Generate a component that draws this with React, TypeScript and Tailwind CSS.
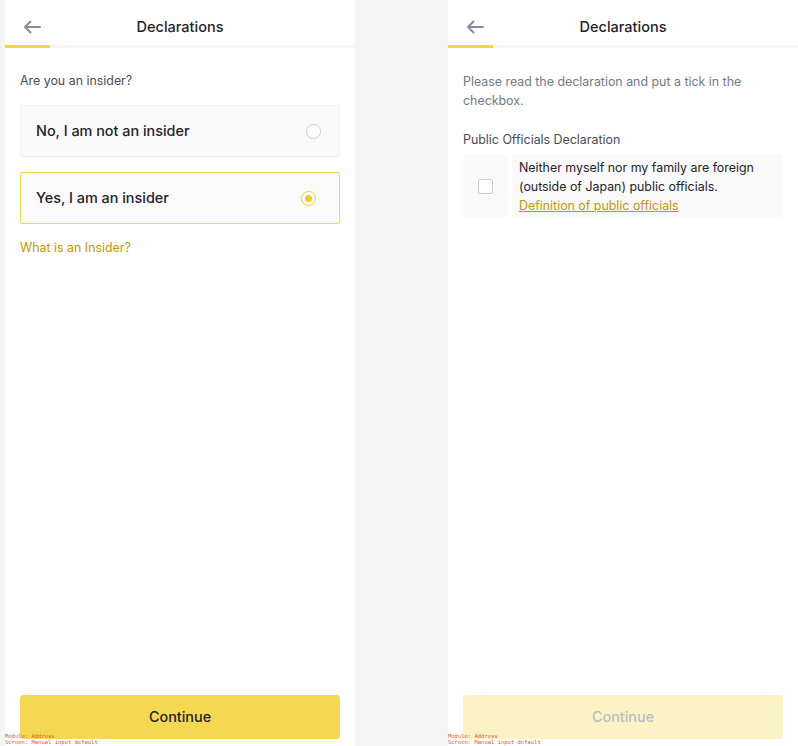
import React from "react";

const font = { fontFamily: "Inter, 'Noto Sans', sans-serif" };

function Header() {
  return (
    <div>
      <div className="relative h-[45px] flex items-start justify-center pt-[17px]">
        <svg className="absolute left-[18px] top-[20px]" width="18" height="14" viewBox="0 0 18 14" fill="none">
          <path d="M17 7H2M7.5 1.5L2 7l5.5 5.5" stroke="#848e9c" strokeWidth="2" strokeLinecap="round" strokeLinejoin="round" />
        </svg>
        <span className="text-[14.5px] leading-[20px] font-medium text-[#1e2329]">Declarations</span>
      </div>
      <div className="h-[3px] bg-[#f5f5f5] flex">
        <div className="w-[45px] h-[3px] bg-[#f5d34a]" />
      </div>
    </div>
  );
}

function Debug() {
  return (
    <div className="absolute left-0 bottom-[1px] text-[5.5px] leading-[6px] text-[#e5532d]" style={{ fontFamily: "'DejaVu Sans Mono', monospace" }}>
      <div>Module: Address</div>
      <div>Screen: Manual input default</div>
    </div>
  );
}

export default function App() {
  return (
    <div className="w-[798px] h-[746px] bg-[#f5f5f5] flex" style={font}>
      <div className="ml-[5px] w-[350px] h-[746px] bg-white flex flex-col relative">
        <Header />
        <div className="px-[15px] flex-1 flex flex-col">
          <div className="mt-[25px] text-[12.4px] leading-[16px] text-[#474d57]">Are you an insider?</div>
          <div className="mt-[16px] h-[52px] rounded-[3px] border border-[#f0f0f0] bg-[#fafafa] flex items-center justify-between pl-[15px] pr-[18px]">
            <span className="text-[14.4px] font-medium text-[#1e2329]">No, I am not an insider</span>
            <span className="w-[15px] h-[15px] rounded-full border border-[#c7cbd1] bg-white" />
          </div>
          <div className="mt-[15px] h-[52px] rounded-[3px] border border-[#f5d34a] bg-[#fbfbfb] flex items-center justify-between pl-[15px] pr-[23px]">
            <span className="text-[14.4px] font-medium text-[#1e2329]">Yes, I am an insider</span>
            <span className="w-[15px] h-[15px] rounded-full border-[1.5px] border-[#f0c929] bg-white flex items-center justify-center">
              <span className="w-[7px] h-[7px] rounded-full bg-[#f0c929]" />
            </span>
          </div>
          <div className="mt-[16px] text-[12.4px] leading-[16px] text-[#c99400]">What is an Insider?</div>
          <div className="flex-1" />
          <div className="mb-[7px] h-[44px] rounded-[4px] bg-[#f5d851] flex items-center justify-center text-[14.4px] font-medium text-[#1e2329]">Continue</div>
        </div>
        <Debug />
      </div>
      <div className="ml-[93px] w-[350px] h-[746px] bg-white flex flex-col relative">
        <Header />
        <div className="px-[15px] flex-1 flex flex-col">
          <div className="mt-[24px] text-[12.4px] leading-[19px] text-[#707a8a]">Please read the declaration and put a tick in the checkbox.</div>
          <div className="mt-[22px] text-[12.4px] leading-[16px] text-[#474d57]">Public Officials Declaration</div>
          <div className="mt-[6px] flex gap-[4px] h-[64px]">
            <div className="w-[45px] rounded-[3px] bg-[#fafafa] flex items-center justify-center">
              <span className="w-[15px] h-[15px] rounded-[2px] border border-[#c7cbd1] bg-white" />
            </div>
            <div className="flex-1 rounded-[3px] bg-[#fafafa] px-[7px] pt-[4px] text-[12.4px] leading-[19px] text-[#1e2329]">
              <div>Neither myself nor my family are foreign (outside of Japan) public officials.</div>
              <div className="text-[#c99400] underline">Definition of public officials</div>
            </div>
          </div>
          <div className="flex-1" />
          <div className="mb-[7px] h-[44px] rounded-[4px] bg-[#fcf3c5] flex items-center justify-center text-[14.4px] font-medium text-[#b7bdc6]">Continue</div>
        </div>
        <Debug />
      </div>
    </div>
  );
}
